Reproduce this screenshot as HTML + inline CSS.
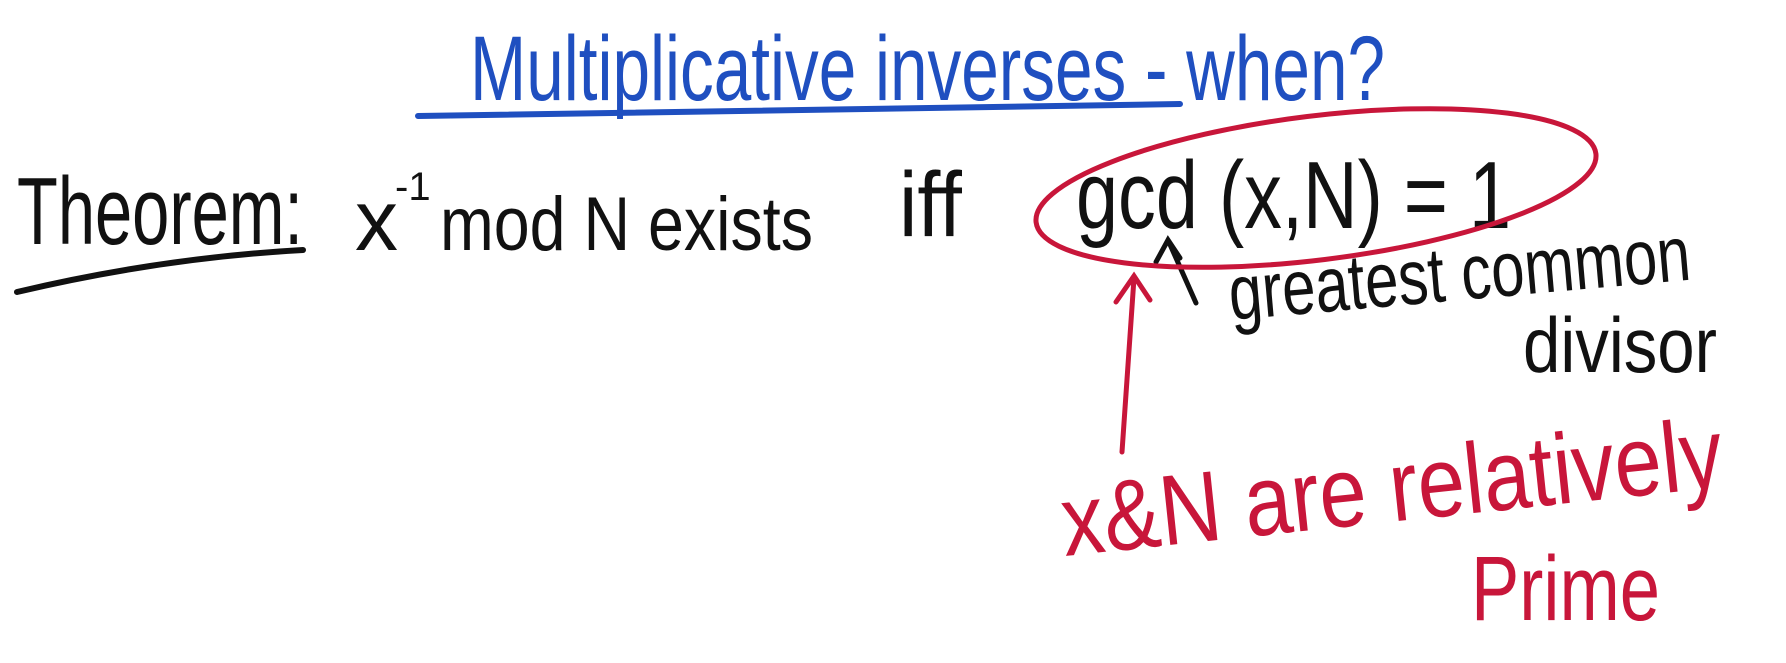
<!DOCTYPE html>
<html><head><meta charset="utf-8"><style>
html,body{margin:0;padding:0;background:#fff;width:1786px;height:663px;overflow:hidden}
text{font-family:"Liberation Sans Narrow","Liberation Sans",sans-serif}
</style></head><body>
<svg width="1786" height="663" viewBox="0 0 1786 663" xmlns="http://www.w3.org/2000/svg">
<g fill="#1f4fc0">
<text x="470" y="100" font-size="92" textLength="915" lengthAdjust="spacingAndGlyphs">Multiplicative inverses - when?</text>
</g>
<path d="M418 116 Q800 110 1180 104" stroke="#1f4fc0" stroke-width="6" fill="none" stroke-linecap="round"/>
<g fill="#111">
<text x="17" y="244" font-size="96" textLength="286" lengthAdjust="spacingAndGlyphs">Theorem:</text>
<text x="355" y="250" font-size="86">x</text>
<text x="395" y="200" font-size="40">-1</text>
<text x="440" y="250" font-size="76" textLength="373" lengthAdjust="spacingAndGlyphs">mod N exists</text>
<text x="899" y="236" font-size="92" transform="translate(899 236) scale(0.9 1) translate(-899 -236)">iff</text>
<text x="1076" y="228" font-size="96" textLength="435" lengthAdjust="spacingAndGlyphs">gcd (x,N) = 1</text>
<text x="1231" y="320" font-size="78" textLength="463" lengthAdjust="spacingAndGlyphs" transform="rotate(-5 1231 320)">greatest common</text>
<text x="1523" y="372" font-size="78" textLength="194" lengthAdjust="spacingAndGlyphs">divisor</text>
</g>
<path d="M17 292 Q160 258 303 250" stroke="#111" stroke-width="6" fill="none" stroke-linecap="round"/>
<path d="M1196 303 L1168 240 M1156 262 L1168 240 L1180 258" stroke="#111" stroke-width="5" fill="none" stroke-linecap="round"/>
<ellipse cx="1316" cy="188" rx="282" ry="72" transform="rotate(-7 1316 188)" stroke="#c8163a" stroke-width="5" fill="none"/>
<path d="M1122 452 L1134 278 M1116 302 L1134 276 L1150 300" stroke="#c8163a" stroke-width="5" fill="none" stroke-linecap="round"/>
<g fill="#c8163a">
<text x="1065" y="556" font-size="100" textLength="664" lengthAdjust="spacingAndGlyphs" transform="rotate(-6 1065 556)">x&amp;N are relatively</text>
<text x="1471" y="620" font-size="92" textLength="189" lengthAdjust="spacingAndGlyphs">Prime</text>
</g>
</svg>
</body></html>
